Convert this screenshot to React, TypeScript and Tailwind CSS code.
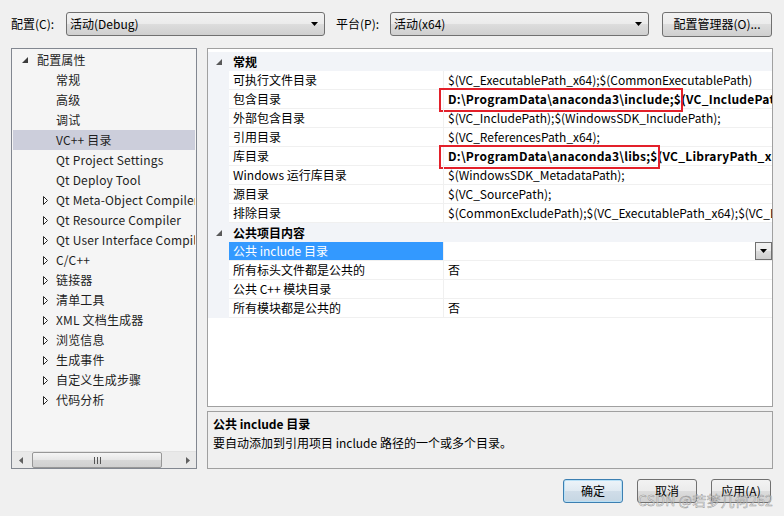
import React from "react";

const OpenTri = ({ color = "#3c3c3c" }: { color?: string }) => (
  <svg width="6" height="6" viewBox="0 0 6 6" className="block">
    <path d="M6 0 L6 6 L0 6 Z" fill={color} />
  </svg>
);

const ClosedTri = () => (
  <svg width="5" height="9" viewBox="0 0 5 9" className="block">
    <path d="M0.5 0.5 L4.5 4.5 L0.5 8.5 Z" fill="#ffffff" stroke="#262626" strokeWidth="1" />
  </svg>
);

const DownArrow = () => (
  <svg width="7" height="4" viewBox="0 0 7 4" className="block">
    <path d="M0 0 H7 L3.5 4 Z" fill="#000" />
  </svg>
);

type TreeItem = { t: string; lvl: 0 | 1; exp?: "open" | "closed"; sel?: boolean };

const tree: TreeItem[] = [
  { t: "配置属性", lvl: 0, exp: "open" },
  { t: "常规", lvl: 1 },
  { t: "高级", lvl: 1 },
  { t: "调试", lvl: 1 },
  { t: "VC++ 目录", lvl: 1, sel: true },
  { t: "Qt Project Settings", lvl: 1 },
  { t: "Qt Deploy Tool", lvl: 1 },
  { t: "Qt Meta-Object Compiler", lvl: 1, exp: "closed" },
  { t: "Qt Resource Compiler", lvl: 1, exp: "closed" },
  { t: "Qt User Interface Compiler", lvl: 1, exp: "closed" },
  { t: "C/C++", lvl: 1, exp: "closed" },
  { t: "链接器", lvl: 1, exp: "closed" },
  { t: "清单工具", lvl: 1, exp: "closed" },
  { t: "XML 文档生成器", lvl: 1, exp: "closed" },
  { t: "浏览信息", lvl: 1, exp: "closed" },
  { t: "生成事件", lvl: 1, exp: "closed" },
  { t: "自定义生成步骤", lvl: 1, exp: "closed" },
  { t: "代码分析", lvl: 1, exp: "closed" },
];

type GridRow =
  | { kind: "cat"; name: string }
  | { kind: "prop"; name: string; value?: React.ReactNode; sel?: boolean };

const RedBox = ({ children }: { children: React.ReactNode }) => (
  <span className="relative inline-block h-[19px] leading-[18px] font-bold tracking-[0.25px]">
    {children}
    <span className="absolute z-10 left-[-9px] right-[-2px] top-[-2px] bottom-[-3px] border-2 border-[#e3202a]" />
  </span>
);

const rows: GridRow[] = [
  { kind: "cat", name: "常规" },
  { kind: "prop", name: "可执行文件目录", value: "$(VC_ExecutablePath_x64);$(CommonExecutablePath)" },
  {
    kind: "prop",
    name: "包含目录",
    value: (
      <>
        <RedBox>{"D:\\ProgramData\\anaconda3\\include;$"}</RedBox>
        <span className="font-bold tracking-[0.25px]">{"(VC_IncludePath);$(WindowsSDK_IncludePath);"}</span>
      </>
    ),
  },
  { kind: "prop", name: "外部包含目录", value: "$(VC_IncludePath);$(WindowsSDK_IncludePath);" },
  { kind: "prop", name: "引用目录", value: "$(VC_ReferencesPath_x64);" },
  {
    kind: "prop",
    name: "库目录",
    value: (
      <>
        <RedBox>{"D:\\ProgramData\\anaconda3\\libs;$"}</RedBox>
        <span className="font-bold tracking-[0.25px]">{"(VC_LibraryPath_x64);$(WindowsSDK_LibraryPath_x64)"}</span>
      </>
    ),
  },
  { kind: "prop", name: "Windows 运行库目录", value: "$(WindowsSDK_MetadataPath);" },
  { kind: "prop", name: "源目录", value: "$(VC_SourcePath);" },
  { kind: "prop", name: "排除目录", value: "$(CommonExcludePath);$(VC_ExecutablePath_x64);$(VC_LibraryPath_x64)" },
  { kind: "cat", name: "公共项目内容" },
  { kind: "prop", name: "公共 include 目录", sel: true },
  { kind: "prop", name: "所有标头文件都是公共的", value: "否" },
  { kind: "prop", name: "公共 C++ 模块目录" },
  { kind: "prop", name: "所有模块都是公共的", value: "否" },
];

const comboBg = "bg-[linear-gradient(#f2f2f2,#ebebeb_50%,#dddddd_50%,#cfcfcf)]";

export default function App() {
  return (
    <div className="relative w-[784px] h-[516px] overflow-hidden bg-[#f0f0f0] text-[12px] text-[#000] font-['Noto_Sans_CJK_SC','Microsoft_YaHei',sans-serif] pt-[11px] px-[11px]">
      {/* top row */}
      <div className="flex items-center h-[26px]">
        <div className="w-[55px] leading-[16px]">配置(C):</div>
        <div className={`flex items-center justify-between w-[259px] h-[24px] border border-[#707070] rounded-[3px] ${comboBg} pl-[3px] pr-[6px]`}>
          <span className="leading-[16px]">活动(Debug)</span>
          <DownArrow />
        </div>
        <div className="ml-[11px] w-[54px] leading-[16px]">平台(P):</div>
        <div className={`flex items-center justify-between w-[259px] h-[24px] border border-[#707070] rounded-[3px] ${comboBg} pl-[3px] pr-[6px]`}>
          <span className="leading-[16px]">活动(x64)</span>
          <DownArrow />
        </div>
        <div className={`ml-[13px] flex items-center justify-center w-[110px] h-[25px] border border-[#707070] rounded-[3px] ${comboBg}`}>
          配置管理器(O)...
        </div>
      </div>

      {/* main */}
      <div className="flex mt-[11px] gap-[10px]">
        {/* tree */}
        <div className="flex flex-col shrink-0 w-[186px] h-[421px] border border-[#828790] bg-[#f5f5f5]">
          <div className="flex-1 pt-[1px] overflow-hidden">
            {tree.map((it, i) => (
              <div
                key={i}
                className={`flex items-center h-[20px] mx-px whitespace-nowrap overflow-hidden leading-[20px] ${it.sel ? "bg-[#cccedb]" : ""}`}
              >
                {it.lvl === 0 ? (
                  <div className="w-[24px] shrink-0 pl-[9px]">
                    <OpenTri />
                  </div>
                ) : (
                  <div className="w-[43px] shrink-0 pl-[30px]">{it.exp === "closed" ? <ClosedTri /> : null}</div>
                )}
                <span className="text-[#1e1e1e] tracking-[0.18px]">{it.t}</span>
              </div>
            ))}
          </div>
          {/* horizontal scrollbar */}
          <div className="flex items-center h-[17px] bg-[#e9e9e9] border-t border-[#e2e2e2]">
            <div className="w-[17px] h-full flex items-center justify-center">
              <svg width="4" height="7" viewBox="0 0 4 7" className="block">
                <path d="M4 0 V7 L0 3.5 Z" fill="#606060" />
              </svg>
            </div>
            <div className="ml-[3px] w-[130px] h-[16px] rounded-[2px] border border-[#979797] bg-[linear-gradient(#f5f5f5,#e6e6e6_50%,#d8d8d8_50%,#d0d0d0)] flex items-center justify-center gap-[2px]">
              <span className="w-px h-[7px] bg-[#555]" />
              <span className="w-px h-[7px] bg-[#555]" />
              <span className="w-px h-[7px] bg-[#555]" />
            </div>
            <div className="flex-1" />
            <div className="w-[17px] h-full flex items-center justify-center">
              <svg width="4" height="7" viewBox="0 0 4 7" className="block">
                <path d="M0 0 V7 L4 3.5 Z" fill="#606060" />
              </svg>
            </div>
          </div>
        </div>

        {/* right column */}
        <div className="flex flex-col shrink-0 min-w-0 w-[566px] gap-[4px]">
          <div className="h-[359px] w-[566px] border border-[#a0a0a0] bg-white pt-[3px] overflow-hidden">
            {rows.map((r, i) =>
              r.kind === "cat" ? (
                <div key={i} className="flex items-center h-[19px] bg-[#f2f4f8] font-bold leading-[19px]">
                  <div className="w-[25px] shrink-0 pl-[8px]">
                    <OpenTri color="#595959" />
                  </div>
                  <span>{r.name}</span>
                </div>
              ) : (
                <div key={i} className="flex h-[19px] leading-[18px]">
                  <div className="w-[21px] shrink-0 bg-[#f2f4f8]" />
                  <div
                    className={`w-[214px] shrink-0 pl-[4px] whitespace-nowrap overflow-hidden border-b border-[#f0f0f0] ${r.sel ? "bg-[#3399ff] text-white border-[#3399ff]" : ""}`}
                  >
                    {r.name}
                  </div>
                  <div className="relative w-[329px] shrink-0 pl-[4px] whitespace-nowrap border-b border-l border-[#f0f0f0] [clip-path:inset(-4px_0px_-4px_-14px)]">
                    {r.value}
                    {r.sel && (
                      <div className="absolute right-0 top-0 w-[17px] h-[18px] border border-[#707070] bg-[linear-gradient(#f2f2f2,#ebebeb_50%,#dddddd_50%,#cfcfcf)] flex items-center justify-center">
                        <DownArrow />
                      </div>
                    )}
                  </div>
                </div>
              )
            )}
          </div>
          {/* description */}
          <div className="h-[58px] border border-[#a0a0a0] pl-[5px] pt-[2px]">
            <div className="font-bold leading-[19px]">公共 include 目录</div>
            <div className="leading-[19px]">要自动添加到引用项目 include 路径的一个或多个目录。</div>
          </div>
        </div>
      </div>

      {/* buttons */}
      <div className="flex justify-end gap-[14px] mt-[10px] pr-[2px]">
        <div className="flex items-center justify-center w-[60px] h-[24px] rounded-[3px] border border-[#3c7fb1] bg-[linear-gradient(#edf4f9,#dfe9f1_50%,#d0dde8_50%,#c6d6e3)] shadow-[inset_0_0_0_1px_#b8e0f6]">
          确定
        </div>
        <div className={`flex items-center justify-center w-[60px] h-[24px] rounded-[3px] border border-[#707070] ${comboBg}`}>
          取消
        </div>
        <div className={`flex items-center justify-center w-[60px] h-[24px] rounded-[3px] border border-[#707070] ${comboBg}`}>
          应用(A)
        </div>
      </div>

      {/* watermark */}
      <div className="absolute left-[638px] top-[491px] text-[14px] leading-[18px] tracking-[0.2px] whitespace-nowrap text-[rgba(255,255,255,0.55)] [-webkit-text-stroke:0.5px_rgba(120,120,120,0.75)]">
        CSDN @若梦几何262
      </div>
    </div>
  );
}
